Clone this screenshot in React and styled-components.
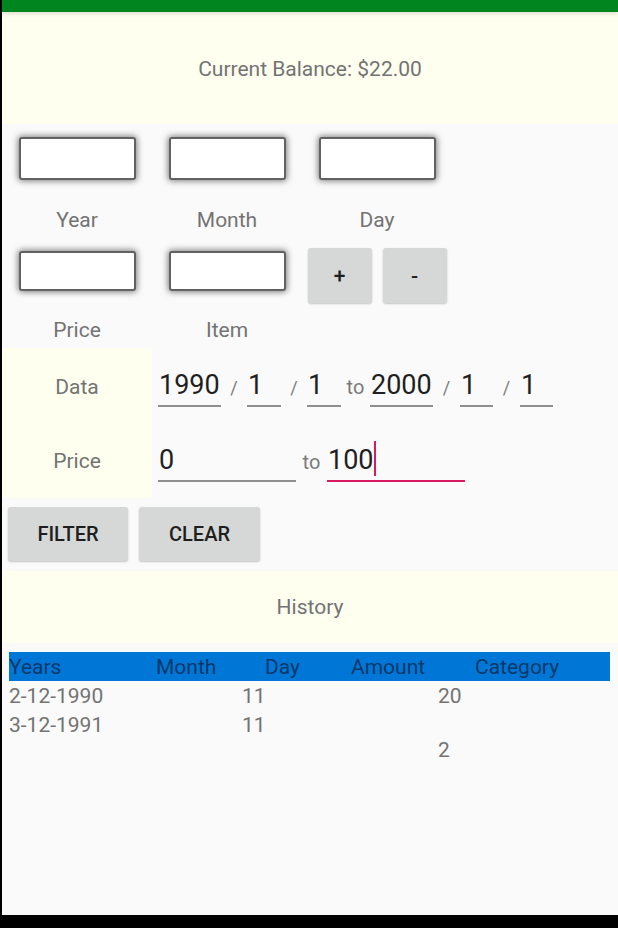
import React from "react";
import styled, { createGlobalStyle } from "styled-components";

const Global = createGlobalStyle`
  html, body { margin: 0; padding: 0; background: #000; }
  body { font-family: Roboto, "Noto Sans", Arial, sans-serif; }
  * { box-sizing: border-box; }
`;

const Screen = styled.div`
  margin-left: 2px;
  height: 915px;
  background: #fafafa;
  display: flex;
  flex-direction: column;
  overflow: hidden;
  font-family: Roboto, "Noto Sans", Arial, sans-serif;
`;

const StatusBar = styled.div`
  height: 12px;
  background: #00851f;
  position: relative;
  z-index: 1;
  box-shadow: 0 2px 4px rgba(0, 0, 0, 0.12);
`;

const Panel = styled.div`
  height: ${(p) => p.$h}px;
  background: #fffff0;
  display: flex;
  align-items: center;
  justify-content: center;
  padding-top: ${(p) => p.$pt || 0}px;
  color: #737373;
  font-size: 21px;
  margin-top: ${(p) => p.$mt || 0}px;
`;

const InputRow = styled.div`
  display: flex;
  align-items: flex-start;
  margin-top: ${(p) => p.$mt}px;
`;

const Cell = styled.div`
  width: 150px;
  display: flex;
  flex-direction: column;
  align-items: center;
`;

const Box = styled.div`
  width: 117px;
  height: ${(p) => p.$h}px;
  margin-top: ${(p) => p.$mt || 0}px;
  background: #fff;
  border: 2px solid #626262;
  border-radius: 3px;
  box-shadow: 0 0 6px 1px rgba(0, 0, 0, 0.5);
`;

const Label = styled.div`
  margin-top: ${(p) => p.$mt}px;
  height: 25px;
  line-height: 25px;
  font-size: 21px;
  color: #737373;
`;

const SmallBtns = styled.div`
  width: 150px;
  display: flex;
  justify-content: center;
  gap: 11px;
`;

const GreyButton = styled.button`
  width: ${(p) => p.$w}px;
  height: ${(p) => p.$h}px;
  border: none;
  border-radius: 3px;
  background: #d6d7d7;
  box-shadow: 0 1px 2px rgba(0, 0, 0, 0.22);
  color: #1e1e1e;
  font-family: Roboto, "Noto Sans", Arial, sans-serif;
  font-weight: 500;
  font-size: ${(p) => p.$fs || 20}px;
  text-transform: uppercase;
  padding: 0;
  display: flex;
  align-items: center;
  justify-content: center;
`;

const FilterSection = styled.div`
  display: grid;
  grid-template-columns: 150px 1fr;
  margin-top: 5px;
`;

const FilterLabels = styled.div`
  background: #fffff0;
  display: flex;
  flex-direction: column;
`;

const FilterLabel = styled.div`
  height: 75px;
  display: flex;
  align-items: center;
  justify-content: center;
  padding-top: ${(p) => p.$pt || 0}px;
  font-size: 21px;
  color: #737373;
`;

const FieldsCol = styled.div`
  display: flex;
  flex-direction: column;
  padding-left: 6px;
`;

const FieldRow = styled.div`
  height: 75px;
  padding-top: 21px;
  display: flex;
  align-items: baseline;
`;

const Field = styled.div`
  width: ${(p) => p.$w}px;
  height: 38px;
  font-size: 27px;
  line-height: 32px;
  color: #1f1f1f;
  padding-left: 1px;
  border-bottom: 2px solid ${(p) => (p.$active ? "#d81b60" : "#8e8e8e")};
  display: flex;
  align-items: flex-start;
  white-space: nowrap;
`;

const Caret = styled.span`
  display: inline-block;
  width: 2px;
  height: 35px;
  margin-top: -3px;
  background: #d81b60;
`;

const Sep = styled.span`
  width: ${(p) => p.$w}px;
  text-align: center;
  color: #7a7a7a;
  font-size: ${(p) => p.$fs}px;
  flex: none;
`;

const ActionRow = styled.div`
  display: flex;
  gap: 11px;
  padding-left: 6px;
  margin-top: 9px;
`;

const TableHeader = styled.div`
  margin: 9px 8px 0 7px;
  height: 29px;
  background: #0077d6;
  display: grid;
  grid-template-columns: 147px 109px 86px 124px 1fr;
  align-items: center;
  font-size: 21px;
  color: #07386a;
`;

const DataRow = styled.div`
  margin-left: 7px;
  padding-top: ${(p) => p.$pt}px;
  display: grid;
  grid-template-columns: 233px 196px 1fr;
  font-size: 21px;
  line-height: 25px;
  color: #737373;
`;

const rows = [
  { pt: 3, cells: ["2-12-1990", "11", "20"] },
  { pt: 4, cells: ["3-12-1991", "11", ""] },
  { pt: 0, cells: ["", "", "2"] },
];

export default function App() {
  return (
    <>
      <Global />
      <Screen>
        <StatusBar />
        <Panel $h={112} $pt={2}>Current Balance: $22.00</Panel>

        <InputRow $mt={13}>
          <Cell>
            <Box $h={43} />
            <Label $mt={28}>Year</Label>
          </Cell>
          <Cell>
            <Box $h={43} />
            <Label $mt={28}>Month</Label>
          </Cell>
          <Cell>
            <Box $h={43} />
            <Label $mt={28}>Day</Label>
          </Cell>
        </InputRow>

        <InputRow $mt={15}>
          <Cell>
            <Box $h={40} $mt={3} />
            <Label $mt={27}>Price</Label>
          </Cell>
          <Cell>
            <Box $h={40} $mt={3} />
            <Label $mt={27}>Item</Label>
          </Cell>
          <SmallBtns>
            <GreyButton $w={64} $h={55} $fs={21}>+</GreyButton>
            <GreyButton $w={64} $h={55} $fs={21}>-</GreyButton>
          </SmallBtns>
        </InputRow>

        <FilterSection>
          <FilterLabels>
            <FilterLabel $pt={3}>Data</FilterLabel>
            <FilterLabel>Price</FilterLabel>
          </FilterLabels>
          <FieldsCol>
            <FieldRow>
              <Field $w={63}>1990</Field>
              <Sep $w={26} $fs={18}>/</Sep>
              <Field $w={34}>1</Field>
              <Sep $w={26} $fs={18}>/</Sep>
              <Field $w={34}>1</Field>
              <Sep $w={29} $fs={20}>to</Sep>
              <Field $w={63}>2000</Field>
              <Sep $w={27} $fs={18}>/</Sep>
              <Field $w={33}>1</Field>
              <Sep $w={27} $fs={18}>/</Sep>
              <Field $w={33}>1</Field>
            </FieldRow>
            <FieldRow>
              <Field $w={138}>0</Field>
              <Sep $w={31} $fs={20}>to</Sep>
              <Field $w={138} $active>
                100
                <Caret />
              </Field>
            </FieldRow>
          </FieldsCol>
        </FilterSection>

        <ActionRow>
          <GreyButton $w={120} $h={54}>Filter</GreyButton>
          <GreyButton $w={121} $h={54}>Clear</GreyButton>
        </ActionRow>

        <Panel $h={72} $mt={10}>History</Panel>

        <TableHeader>
          <span>Years</span>
          <span>Month</span>
          <span>Day</span>
          <span>Amount</span>
          <span>Category</span>
        </TableHeader>

        {rows.map((r, i) => (
          <DataRow key={i} $pt={r.pt}>
            {r.cells.map((c, j) => (
              <span key={j}>{c}</span>
            ))}
          </DataRow>
        ))}
      </Screen>
    </>
  );
}
